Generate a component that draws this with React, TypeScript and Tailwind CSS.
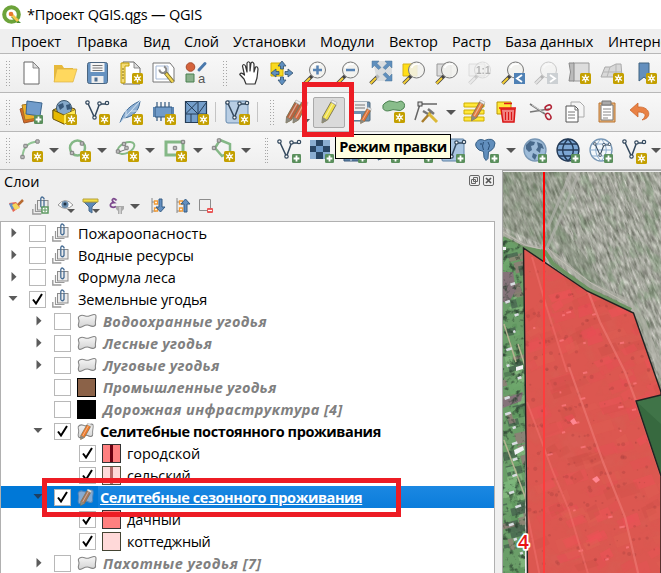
import React from "react";

type P = { children?: React.ReactNode };

const I = ({ children }: P) => (
  <div className="flex h-[38px] w-[33px] shrink-0 items-center justify-center">
    <svg width="24" height="24" viewBox="0 0 24 24" fill="none" className="overflow-visible">{children}</svg>
  </div>
);

const Handle = () => (
  <div className="grid shrink-0 grid-cols-2 gap-x-[2px] gap-y-[2px]">
    {Array.from({ length: 18 }, (_, i) => (
      <i key={i} className="h-px w-px bg-[#a6a6a6]" />
    ))}
  </div>
);

const Drop = () => (
  <div className="flex w-[15px] shrink-0 justify-center">
    <svg width="10" height="5" viewBox="0 0 10 5"><path d="M0 0h10L5 5z" fill="#555" /></svg>
  </div>
);

const ShapeDrop = () => (
  <div className="-ml-[2px] mr-[2px] flex shrink-0"><Drop /></div>
);

const Sep = () => <div className="h-5 w-px shrink-0 bg-[#c4c4c4]" />;

const Star = ({ x = 12, y = 13 }) => (
  <g transform={`translate(${x} ${y})`}>
    <rect width="11" height="11" rx="1.5" fill="#c4a000" />
    <path d="M5.5 1.5v8M2 3.5l7 4M2 7.5l7-4" stroke="#fff" strokeWidth="1.4" />
    <circle cx="5.5" cy="5.5" r="2.1" fill="#fff" />
    <circle cx="5.5" cy="5.5" r=".7" fill="#c4a000" />
  </g>
);

const Plus = ({ x = 14, y = 15 }) => (
  <g transform={`translate(${x} ${y})`}>
    <rect width="9" height="9" rx="1.3" fill="#5a8f5c" />
    <path d="M4.5 1.6v5.8M1.6 4.5h5.8" stroke="#fff" strokeWidth="1.8" />
  </g>
);

const Nodes = ({ pts }: { pts: number[][] }) => (
  <>
    {pts.map(([x, y], i) => (
      <rect key={i} x={x - 1.7} y={y - 1.7} width="3.4" height="3.4" rx=".5" fill="#bbb" stroke="#777" strokeWidth=".9" />
    ))}
  </>
);

const Lens = ({ faint = false, children }: P & { faint?: boolean }) => (
  <g opacity={faint ? 0.35 : 1}>
    <path d="M9.500 14.500 1.500 22.500" stroke="#444" strokeWidth="3.600" />
    <path d="M7 17 1.500 22.500" stroke={faint ? "#ccc" : "#f5cf35"} strokeWidth="2" />
    <circle cx="14.500" cy="9" r="8" fill="#f1f1ee" fillOpacity=".88" stroke="#777" />
    <path d="M9.500 7a6 6 0 0 1 8-3.500" stroke="#fff" strokeWidth="1.500" />
    {children}
  </g>
);

const Pencil = ({ c = "#e27136", x = 0, y = 0, s = 1 }) => (
  <g transform={`translate(${x} ${y}) scale(${s})`} strokeLinejoin="round">
    <path d="M14 2l5 3-8.500 15-5.500 3 .5-6z" fill={c} stroke="#766f50" strokeWidth=".9" />
    <path d="M16 3.500 8 17.800" stroke="#fff" strokeOpacity=".45" strokeWidth="1.300" />
    <path d="M14 2l1-2 5 2.500-1 2.500z" fill="#eee" stroke="#aaa" strokeWidth=".7" />
    <path d="M5.500 17l5 3-5.500 3z" fill="#8a8a80" />
  </g>
);

const V = () => (
  <g stroke="#34495e" strokeWidth="1.200">
    <path d="M3 3.500 9.500 17.500 14.500 4h8" strokeWidth="1.500" />
    <g fill="#fff"><circle cx="2.500" cy="2.500" r="1.700" /><circle cx="9.500" cy="17.500" r="1.700" /><circle cx="14.500" cy="3.500" r="1.700" /><circle cx="22" cy="3" r="1.700" /></g>
  </g>
);

const Page = ({ w = 16 }) => (
  <>
    <path d={`M4 1h${w - 6}l6 6v16H4z`} fill="#fff" stroke="#666" />
    <path d={`M${w - 2} 1v6h6z`} fill="#ddd" stroke="#777" strokeWidth=".8" />
  </>
);

const Globe = ({ kind = 0 }) => (
  <>
    <circle cx="12" cy="11" r="11" fill={kind === 2 ? "#f4f8fb" : kind ? "#7da7d4" : "#9dbbd8"} stroke={kind === 1 ? "#243b57" : "#7897b5"} strokeWidth="1.300" />
    {kind === 0 ? (
      <path d="M3 6l4-4 5 1-1 3-3 1 1 4-3 2-3-3zM14 3l5 2 2 5-3-1-1 5-4-3 2-3zM10 14l4 2-2 5-3-3z" fill="#48698b" />
    ) : (
      <path d="M1 11h22M3 5h18M3 17h18M12 0c-7 7-7 15 0 22M12 0c7 7 7 15 0 22" stroke={kind === 1 ? "#243b57" : "#8caccd"} strokeWidth={kind === 1 ? 1.6 : 1} />
    )}
    {kind === 2 && <g transform="translate(4 3) scale(.75)"><V /></g>}
    <Plus x={15} y={15} />
  </>
);

const Clip = ({ children }: P) => (
  <svg width="18" height="19" viewBox="0 0 18 19" fill="none" className="-mt-[2px] overflow-visible">
    <path d="M.8 13v5h8.500" stroke="#9a9a9a" strokeWidth="1.400" />
    <path d="M3.500 8v7.500h9" stroke="#999" strokeWidth="1.200" />
    <rect x="5.500" y="4.500" width="10.500" height="9.500" fill="#ececec" stroke="#8b8b8b" />
    <path d="M12 4v6.500q-1.800 2.500-3.200 0V2.500q1-3 3.200 0v1" stroke="#466c93" strokeWidth="1.300" />
    {children}
  </svg>
);

const BLOB = "M1.500 3.500C5-1 8 4 12 2.500S19 0 19 3s-1 4-.5 7-3 3.500-6 2-5 0-8 1.500S.8 12 1.800 9 .8 6 1.500 3.500z";

const Poly = ({ edit = false, sel = false }) => (
  <svg width="21" height="17" viewBox="0 0 21 17" fill="none">
    <defs><linearGradient id="pg" x2="0" y2="1"><stop stopColor="#f6f6f6" /><stop offset="1" stopColor="#d3d3d3" /></linearGradient></defs>
    <path d={BLOB} fill={sel ? "#86abd2" : "url(#pg)"} stroke={sel ? "#5387ba" : "#858585"} strokeWidth="1.100" transform={edit ? "scale(.85 1.050)" : "translate(0 .5)"} />
    {edit && <Pencil x={0} y={0} s={0.72} c={sel ? "#a8765a" : "#ef7a2a"} />}
  </svg>
);

const Row1 = () => (
  <>
    <I><Page w={15} /></I>
    <I><path d="M1 4h8l2 3h9v14H1z" fill="#e7b93a" /><path d="M4 8h20l-4 13H1z" fill="#ffd85e" stroke="#dbb145" strokeWidth=".7" /></I>
    <I><rect x="1.500" y="1.500" width="20" height="21" rx="2" fill="#6692c0" stroke="#4a6580" /><path d="M4.500 2h14v9h-14z" fill="#f5f5f5" /><path d="M6.500 4.500h10M6.500 7h10M6.500 9.500h10" stroke="#777" /><path d="M5.500 15h12v7h-12z" fill="#eee" /><path d="M8.500 16.500h3v4h-3z" fill="#4f6f91" /></I>
    <I><Page w={17} /><path d="M2 2h8v3H6v17H2z" fill="#f4dc78" stroke="#c4a000" /><path d="M3 8h2M3 11h2M3 14h2M3 17h2" stroke="#6c5700" strokeWidth=".8" /><Star x={13} y={12} /></I>
    <I><path d="M1 2h17l4 5v14H1z" fill="#fff" stroke="#777" /><path d="M4 5h12v13H4z" stroke="#a6b9d7" /><path d="M12.500 10.500 21 21" stroke="#786d32" strokeWidth="4" /><path d="M14 12.500 21 21" stroke="#f1d450" strokeWidth="2.200" /><path d="M7.500 8.500a3.500 3.500 0 0 0 6 2.500 3.500 3.500 0 0 0-1.500-5.500" stroke="#8c8c8c" strokeWidth="2" /></I>
    <I><circle cx="5.500" cy="6" r="4.300" fill="#d5633c" stroke="#a74b2d" /><path d="M20 2.500 14 9" stroke="#4a79ac" strokeWidth="3" strokeLinecap="round" /><path d="M1 13h8v8H1z" fill="#8ab08b" stroke="#4b8050" /><text x="13" y="21.500" fill="#555" fontFamily="Liberation Sans" fontSize="13">a</text></I>
    <div className="ml-[10px] mr-[5px]"><Handle /></div>
    <I><path d="M7 23 5 18 .8 13.500Q1.500 10.500 5.500 14L3.500 5q1-3 3 0l1.500 6V2q1.500-2.500 3 0v8l1-8q2-2 3 1v8l1.500-5q2-1 2.500 2l-1 9-2 6z" fill="#fff" stroke="#333" strokeLinejoin="round" strokeWidth="1.200" transform="translate(2 0)" /></I>
    <I><path d="M1 2h12v13H1z" fill="#f8d91f" stroke="#d1ac00" /><path d="M12 0l4 5h-2.500v3h-3V5H8zM12 24l-4-5h2.500v-3h3v3H16zM1 12l5-4v2.500h3v3H6V16zM23 12l-5-4v2.500h-3v3h3V16z" fill="#5f8fc0" stroke="#35536f" strokeWidth=".8" /></I>
    <I><Lens><path d="M14.500 4.500v9M10 9h9" stroke="#5783b4" strokeWidth="2.500" /></Lens></I>
    <I><Lens><path d="M10 9h9" stroke="#5783b4" strokeWidth="2.500" /></Lens></I>
    <I><path d="M9.500 14.500 1.500 22.500" stroke="#444" strokeWidth="3.600" /><path d="M7 17 1.500 22.500" stroke="#f5cf35" strokeWidth="2" /><path d="M4 0h19v20H8z" fill="#d3d7d9" fillOpacity=".8" /><path d="M3 0h7L8 2.500l4 4-2.500 2-4-4L3 7zM23 0h-7l2 2.500-4 4 2.500 2 4-4L23 7zM23 20h-7l2-2.500-4-4 2.500-2 4 4L23 13z" fill="#5f8fbd" stroke="#4b7498" strokeWidth=".5" /></I>
    <I><path d="M1 3h14v12H1z" fill="#ffde17" stroke="#d7b216" /><Lens /></I>
    <I><path d="M2 3h14v12H2z" fill="#ddd" stroke="#999" /><Lens /></I>
    <I><g opacity=".6"><path d="M1 3h16v12H1z" fill="#eee" stroke="#ccc" /><Lens faint /><text x="8" y="12.500" fontSize="10" fontWeight="bold" fill="#888" fontFamily="Liberation Sans">1:1</text></g></I>
    <I><Lens /><path d="M13 12h11v11H13z" fill="#4f81b5" /><path d="m21 14-5 3.500 5 3.500" stroke="#fff" strokeWidth="1.900" /></I>
    <I><Lens faint /><path d="M13 12h11v11H13z" fill="#ccd0d3" /><path d="m16 14 5 3.500-5 3.500" stroke="#fff" strokeWidth="1.900" /></I>
    <I><path d="M6 2h16v18H6z" fill="#ddd" stroke="#999" /><path d="M2 2h5v18H2q3-9 0-18z" fill="#bbb" stroke="#888" /><Star x={13} y={12} /></I>
    <I><path d="m5 6 5 0 6-3h5l1 13-10 0H1z" fill="#d8d8d8" stroke="#aaa" /><path d="M10 6 7 16M16 3v13M3 11h19" stroke="#b5b5b5" /><Star x={13} y={12} /></I>
    <I><path d="M6 2h10v18l-5-4-5 4z" fill="#638fbe" stroke="#426580" /><Star x={13} y={12} /></I>
  </>
);

const Row2 = () => (
  <>
    <I><path d="m1 9 14-4 4 15-14 3z" fill="#d66b25" stroke="#9b5428" /><path d="m3 5 14-2 2 15-13 2z" fill="#edb12a" stroke="#a27423" /><path d="m8 1 15 2-2 13-14-2z" fill="#719ccb" stroke="#3c658d" /><Plus x={15} /></I>
    <I><path d="M1 10 12 5l11 4v9l-11 6-11-6z" fill="#e7bd22" stroke="#5c4e20" /><circle cx="12" cy="8" r="7.500" fill="#85a9cb" stroke="#3b566d" /><path d="m6 5 5-2 1 4-4 3zm8 0 4-1 1 5-4 1z" fill="#38587a" /><path d="m1 10 11 5 11-5v9l-11 5-11-5z" fill="#e6b900" stroke="#6d5810" /><path d="m12 15 11-5v9l-11 5z" fill="#ffea58" /><Star x={14} y={14} /></I>
    <I><V /><Star x={14} y={14} /></I>
    <I><path d="M2 23c2-7 6-16 20-22-1 11-8 16-16 17" fill="#8caed2" stroke="#426d99" /><path d="M2 23 22 1M8 16V9m5 2h8" stroke="#d9e7f4" /><Star x={14} y={14} /></I>
    <I><path d="M4 7h17v10H4z" fill="#709bc9" stroke="#31577e" /><path d="M6 7V2m4 5V2m4 5V2m4 5V2M6 17v4m4-4v4" stroke="#31577e" strokeWidth="1.200" /><path d="M2 7h2v10H2zM21 7h2v10h-2z" fill="#5d86b1" /><Star x={14} y={14} /></I>
    <I><path d="M1.500 1.500h21v21h-21z" fill="#749eca" stroke="#263e58" strokeWidth="1.200" /><path d="M1.500 1.500 14 14m0-12.500L1.500 14M14 1v22M1 14h22M7 14v9M14 14 22 3" stroke="#263e58" /><Star x={14} y={14} /></I>
    <div className="ml-[3px] mr-[4px]"><Sep /></div>
    <I><rect x="1" y="1" width="22" height="22" rx="2" fill="#b9cee4" stroke="#6489ae" /><V /><Star x={14} y={14} /></I>
    <div className="ml-[4px]"><Sep /></div>
    <div className="ml-[12px] mr-[5px]"><Handle /></div>
    <I><Pencil c="#b8623e" x={-3} y={0} /><Pencil c="#d2653d" x={4} y={0} /><path d="M19 19h7l-3.500 4z" fill="#555" /></I>
    <div className="ml-px mr-[-1px] flex h-[31px] w-8 shrink-0 items-center justify-center rounded-[2px] border border-[#aaa] bg-[#dadada]">
      <I><Pencil c="#efdf49" /></I>
    </div>
    <I><rect x="1" y="2" width="20" height="19" rx="1" fill="#7091ae" stroke="#526a7d" /><path d="M4 2h14v9H4z" fill="#eee" /><path d="M6 5h10M6 8h10" stroke="#777" /><path d="M5 14h7v6H5z" fill="#fff" /><Pencil x={8} y={7} s={0.72} /></I>
    <I><path d="M3 3q4-3.500 8-1.500t8-.5q5 2 3 7-3 4-8 2-3-1-6 .5-5 1.500-7-2-1-4 2-5.500z" fill="#89bd8b" stroke="#4b8150" /><Star x={12} y={12} /></I>
    <I><path d="M0 20 5 4h17" stroke="#666" strokeWidth="1.500" /><rect x="3" y="2" width="4" height="4" fill="#ddd" stroke="#444" /><path d="m7 22 9-10" stroke="#a87d2c" strokeWidth="2.500" /><path d="m13 13 9 9" stroke="#dcb936" strokeWidth="3" /><path d="m13 9 6 5M8 11l5 3" stroke="#777" strokeWidth="2.500" /></I>
    <Drop />
    <I><g fill="#ffe83a" stroke="#cfae00"><path d="M1 3h20v4H1zM1 10h20v4H1zM1 17h20v4H1z" /></g><Pencil c="#e07a3b" x={4} y={0} s={0.9} /></I>
    <I><g transform="translate(1 0)"><path d="M0 2h14v12H0z" fill="#ffe83a" stroke="#b99600" /><path d="M4 9h14l-1 13H6z" fill="#f08080" stroke="#d91515" strokeWidth="1.500" /><path d="M8.500 12v8m3-8v8m3-8v8" stroke="#d91515" /><path d="M2 8h17M7 3.500h8" stroke="#e11a1a" strokeWidth="1.500" /></g></I>
    <I><path d="m1 4 15 10M1 12l19-3" stroke="#777" strokeWidth="1.600" /><path d="m3 5 11 7" stroke="#ddd" strokeWidth=".8" /><ellipse cx="19" cy="7.500" rx="3.300" ry="2.200" transform="rotate(-25 19 7)" stroke="#b22638" strokeWidth="1.500" /><ellipse cx="19" cy="16.500" rx="2.300" ry="3.300" transform="rotate(-35 19 16)" stroke="#b22638" strokeWidth="1.500" /></I>
    <I><path d="M9 2h9l4 4v11H9z" fill="#f5f5f5" stroke="#aaa" /><path d="M4 6h9l3 3v13H4z" fill="#fff" stroke="#555" /><path d="M13 6v4h3M6 12h7m-7 3h7m-7 3h7" stroke="#777" /></I>
    <I><path d="M4 3h16v19H4z" fill="#e9b57c" stroke="#b97532" /><path d="M6 5h12v15H6z" fill="#fff" stroke="#777" /><path d="M7 1h9v4H7z" fill="#aaa" stroke="#777" /><path d="M8 9h8m-8 3h8m-8 3h8m-8 3h5" stroke="#888" /></I>
    <I><path d="M2 10 10 3v4c12-1 15 11 4 13 5-4 4-8-4-8v5z" fill="#e98245" stroke="#c75f23" strokeWidth=".7" /></I>
  </>
);

const Row3 = () => (
  <>
    <I><path d="M2.500 18C3 8 8 3 18 2.500" stroke="#91c494" strokeWidth="2" /><Nodes pts={[[2.5, 18], [5.500, 7], [17.500, 2.500]]} /><Star x={12} y={12} /></I><ShapeDrop />
    <I><circle cx="9.500" cy="9" r="7.500" stroke="#84b886" strokeWidth="2.500" /><Nodes pts={[[14, 4.500], [4, 14]]} /><Star x={12} y={12} /></I><ShapeDrop />
    <I><ellipse cx="10" cy="9" rx="9" ry="5" transform="rotate(-25 10 9)" stroke="#84b886" strokeWidth="2" /><path d="m8 5 3 5-8 3" stroke="#777" /><Nodes pts={[[8, 5], [2, 12.500], [10.500, 9]]} /><Star x={12} y={12} /></I><ShapeDrop />
    <I><path d="M2 3h17v13H2z" stroke="#84b886" strokeWidth="3" /><Nodes pts={[[19, 3], [11, 9]]} /><Star x={12} y={12} /></I><ShapeDrop />
    <I><path d="m8 1 10 4v8l-8 4-7-8z" stroke="#84b886" strokeWidth="2.500" /><Nodes pts={[[7, 1.500], [2, 9]]} /><Star x={12} y={12} /></I><ShapeDrop />
    <div className="ml-[10px] mr-[5px]"><Handle /></div>
    <I><V /><Plus x={15} y={15} /></I>
    <I><path d="M0 1h20v19H0z" fill="#8aadd1" /><path d="M6 1h7v6h7v6h-7v7H6v-7H0V7h6z" fill="#284564" /><path d="M6 7h7v6H6z" fill="#6c98c7" /><Plus x={15} y={15} /></I>
    <I><path d="M1 1h20v21H1z" fill="#5e82a7" stroke="#38587a" /><path d="M1 8h20M1 15h20M8 1v21" stroke="#dae6ef" /><Plus x={15} y={15} /></I>
    <I><path d="M2 21Q8 0 22 2 20 17 2 21z" fill="#7ba4cd" stroke="#355c82" /><Plus x={15} y={15} /></I>
    <I><V /><Plus x={15} y={15} /></I>
    <I><rect x="0" y="0" width="22" height="22" rx="1" fill="#a9c5e1" stroke="#5d80a3" /><V /><Plus x={14} y={15} /></I>
    <I><path d="M1.500 3q3-4 8-1.500Q18-2 20 4q0 5-4.500 8l-2 .5-.5 7-2 2-2-3-.5-6L4 11Q-1 7 1.500 3z" fill="#628fbd" stroke="#365e84" /><path d="M8.500 3q-2 4 0 8M13 3q3 3 0 8" stroke="#294e75" /><circle cx="6" cy="5" r=".8" fill="#183b61" /><Plus x={15} y={15} /></I><Drop />
    <I><Globe /></I><I><Globe kind={1} /></I><I><Globe kind={2} /></I>
    <I><V /><Star x={14} y={14} /></I><ShapeDrop />
  </>
);

const PanelTools = () => (
  <div className="flex h-[30px] items-center gap-[7px] pl-[7px]">
    <svg width="18" height="18" viewBox="0 0 18 18" fill="none"><path d="m2 6 7-1 4 5-7 5q-2-5-4-9z" fill="#e66854" /><path d="m2 7 3 6 3-3-3-4z" fill="#648fc8" /><path d="m5 8 3 5 5-2-4-5z" fill="#f4d85b" /><path d="m11 8 5-5" stroke="#b86b32" strokeWidth="2.500" /></svg>
    <Clip><path d="M10 11h6v6h-6z" fill="#fff" stroke="#5c9860" strokeWidth="1.500" /><path d="M13 12v4M11 14h4" stroke="#5c9860" /></Clip>
    <svg width="18" height="18" viewBox="0 0 18 18" fill="none"><path d="M1 8q7-9 15 0-7 7-15 0z" fill="#fff" stroke="#999" /><circle cx="8" cy="7.500" r="3.500" fill="#698cad" /><circle cx="8" cy="7" r="1.500" fill="#234" /><path d="M10 12h8l-4 4z" fill="#555" /></svg>
    <svg width="18" height="18" viewBox="0 0 18 18" fill="none"><path d="M2 5h13l-5 5v6l-3-2v-4z" fill="#5b88b8" stroke="#47698b" /><path d="M1 2h15v3H1z" fill="#f2dd42" stroke="#b5a13d" /><path d="M10 12h8l-4 4z" fill="#555" /></svg>
    <svg width="18" height="18" viewBox="0 0 18 18" fill="none" className="ml-px overflow-visible"><path d="M8.500 3.500C6-.5 2 3 6 5.500 0 6 2 12.500 8 9.500" stroke="#7d4a8e" strokeWidth="1.800" /><path d="M8 9h8v3l-2 2v3h-4v-3l-2-2z" fill="#aaa" /><path d="M12 10v7" stroke="#eee" /></svg>
    <div className="-ml-[6px] mr-px"><Drop /></div>
    {[0, 1].map((k) => (
      <svg key={k} width="18" height="18" viewBox="0 0 18 18" fill="none"><path d="M2 1v15M2 5h4M2 14h4" stroke="#888" /><path d="M4.500 4h3v3h-3zM4.500 11h3v3h-3z" fill="#fff" stroke="#f29a34" strokeWidth="1.300" /><path d="M9 2h3v8h3l-4.500 5L6 10h3z" fill="#638fc0" stroke="#365d84" transform={k ? "rotate(180 10.500 8.500)" : ""} /></svg>
    ))}
    <svg width="18" height="18" viewBox="0 0 18 18" fill="none" className="-ml-[2px]"><path d="M1.500 2.500h11v11h-11z" fill="#eee" stroke="#8c8c8c" /><rect x="9" y="11" width="6" height="5" rx="1" fill="#e95353" /><path d="M10 13.500h4" stroke="#fff" strokeWidth="1.200" /></svg>
  </div>
);

const Check = ({ on }: { on?: boolean }) => (
  <div className="flex size-[17px] shrink-0 items-center justify-center border border-[#b8b8b8] bg-white">
    {on && <svg width="11" height="12" viewBox="0 0 11 12" fill="none"><path d="M1 6.500 4 10.500 10 1" stroke="#000" strokeWidth="2" /></svg>}
  </div>
);

const Arrow = ({ open, dark }: { open?: boolean; dark?: boolean }) => (
  <svg width="10" height="10" viewBox="0 0 10 10" fill={dark ? "#1d3f63" : "#5b5b5b"}><path d={open ? "M.5 2h9L5 7z" : "M3.500 0v9.500L8.500 4.800z"} /></svg>
);

type Item = { t: string; cls: string; arrow?: "open" | "closed"; on?: boolean; icon: string; lvl: number; sel?: boolean };

const DIM = "font-bold italic text-[#808080] ";
const items: Item[] = [
  { t: "Пожароопасность", cls: "tracking-[0.03px]", arrow: "closed", icon: "clip", lvl: 0 },
  { t: "Водные ресурсы", cls: "tracking-[-0.07px]", arrow: "closed", icon: "clip", lvl: 0 },
  { t: "Формула леса", cls: "tracking-[-0.07px]", arrow: "closed", icon: "clip", lvl: 0 },
  { t: "Земельные угодья", cls: "tracking-[-0.15px]", arrow: "open", on: true, icon: "clip", lvl: 0 },
  { t: "Водоохранные угодья", cls: DIM + "tracking-[0.33px]", arrow: "closed", icon: "poly", lvl: 1 },
  { t: "Лесные угодья", cls: DIM + "tracking-[0.25px]", arrow: "closed", icon: "poly", lvl: 1 },
  { t: "Луговые угодья", cls: DIM + "tracking-[0.25px]", arrow: "closed", icon: "poly", lvl: 1 },
  { t: "Промышленные угодья", cls: DIM + "tracking-[0.2px]", icon: "brown", lvl: 1 },
  { t: "Дорожная инфраструктура [4]", cls: DIM + "tracking-[0.37px]", icon: "black", lvl: 1 },
  { t: "Селитебные постоянного проживания", cls: "font-bold tracking-[-0.4px]", arrow: "open", on: true, icon: "edit", lvl: 1 },
  { t: "городской", cls: "tracking-[0px]", on: true, icon: "city", lvl: 2 },
  { t: "сельский", cls: "tracking-[-0.15px]", on: true, icon: "village", lvl: 2 },
  { t: "Селитебные сезонного проживания", cls: "font-bold text-white underline tracking-[-0.43px]", arrow: "open", on: true, icon: "editsel", lvl: 1, sel: true },
  { t: "дачный", cls: "tracking-[-0.15px]", on: true, icon: "dacha", lvl: 2 },
  { t: "коттеджный", cls: "tracking-[-0.3px]", on: true, icon: "cottage", lvl: 2 },
  { t: "Пахотные угодья [7]", cls: DIM + "tracking-[0.45px]", arrow: "closed", icon: "poly", lvl: 1 },
];

const swatch: Record<string, string> = {
  brown: "border-black bg-[#8b6248]",
  black: "border-black bg-black",
  city: "border-[#333] bg-[linear-gradient(90deg,#ff8080_41%,#6b0010_41%,#6b0010_59%,#ff8080_59%)]",
  village: "border-[#554] bg-[linear-gradient(90deg,#ffd9d9_41%,#b46868_41%,#b46868_56%,#ffd9d9_56%)]",
  dacha: "border-[#333] bg-[#ff8080]",
  cottage: "border-[#443] bg-[#ffd9d9]",
};
const pad = ["pl-[7px]", "pl-[32px]", "pl-[57px]"];

const Tree = () => (
  <div className="min-h-0 w-[495px] flex-1 overflow-hidden border border-b-0 border-[#b0b0b0] bg-white">
    {items.map((r) => (
      <div key={r.t} className={`flex h-[22px] items-center ${pad[r.lvl]} ${r.sel ? "bg-[linear-gradient(90deg,#0078d7_0,#0078d7_97px,transparent_97px),linear-gradient(#1b88e2,#0b7ddb)]" : ""}`}>
        <div className="mr-[4px] w-[17px] shrink-0">{r.arrow && <Arrow open={r.arrow === "open"} dark={r.sel} />}</div>
        <Check on={r.on} />
        <div className={`ml-[6px] flex shrink-0 items-center ${r.lvl === 0 ? "w-[26px]" : r.icon.startsWith("edit") ? "w-[23px]" : r.lvl === 1 ? "w-[26px]" : "w-[25px]"}`}>
          {r.icon === "clip" ? <Clip /> : r.icon === "poly" ? <Poly /> : r.icon.startsWith("edit") ? <Poly edit sel={r.sel} /> : <div className={`size-[19px] border ${swatch[r.icon]}`} />}
        </div>
        <span className={`whitespace-nowrap pt-[2px] ${r.cls}`}>{r.t}</span>
      </div>
    ))}
  </div>
);

const rnd = (n: number) => {
  const v = Math.sin(n * 127.1 + 11.7) * 43758.5453;
  return v - Math.floor(v);
};
const AREA = "M20.500 76 84 119 130.500 141 158 220V223L133 229 158 304V402H24.500L23 268z";
const greens = ["#5f965f", "#83b67e", "#4f7a54", "#8d8474", "#6fa76c", "#8f7d78", "#486650", "#7db77c"];

const MapView = () => (
  <svg width="158" height="401" viewBox="0 0 158 401" fill="none" className="block">
    <defs>
      <filter id="field" x="0" y="0" width="100%" height="100%" colorInterpolationFilters="sRGB"><feTurbulence type="fractalNoise" baseFrequency=".42 .1" numOctaves="3" seed="4" /><feColorMatrix values=".62 0 0 0 .33 .6 .04 0 0 .33 .62 0 0 0 .3 0 0 0 0 1" /></filter>
      <filter id="patch" x="0" y="0" width="100%" height="100%" colorInterpolationFilters="sRGB"><feTurbulence type="fractalNoise" baseFrequency=".09 .045" numOctaves="4" seed="9" /><feColorMatrix values="0 0 0 0 .4 0 0 0 0 .56 0 0 0 0 .38 5 0 0 0 -2.600" /></filter>
      <filter id="grain" x="0" y="0" width="100%" height="100%" colorInterpolationFilters="sRGB"><feTurbulence type="fractalNoise" baseFrequency=".16" numOctaves="3" seed="2" /><feColorMatrix values="0 0 0 0 .16 0 0 0 0 .24 0 0 0 0 .18 4 0 0 0 -2.150" /></filter>
      <filter id="light" x="0" y="0" width="100%" height="100%" colorInterpolationFilters="sRGB"><feTurbulence type="fractalNoise" baseFrequency=".05" numOctaves="4" seed="7" /><feColorMatrix values="0 0 0 0 .82 0 0 0 0 .4 0 0 0 0 .34 4 0 0 0 -1.900" /></filter>
      <clipPath id="area"><path d={AREA} /></clipPath>
      <clipPath id="strip"><path d="M0 56 22 78V401H0z" /></clipPath>
    </defs>
    <g transform="rotate(-22 79 100)"><rect x="-100" y="-90" width="370" height="420" filter="url(#field)" /></g>
    <g transform="rotate(-22 79 100)"><rect x="-100" y="-90" width="370" height="420" filter="url(#patch)" opacity=".3" /></g>
    <path d="M0 0h65L45 75 0 55z" fill="#62785b" opacity=".22" />
    <path d="M52 66 56 50 90 95 116 132 80 115z" fill="#587052" opacity=".28" />
    <path d="M78-5 62 35 43 78M68 0 45 55" stroke="#b5b6af" strokeWidth="3" opacity=".65" />
    <path d="M-2 60 20 74 40 78 52 84 85 112 125 130 140 150 160 205" stroke="#b1b0a7" strokeWidth="6" opacity=".65" />
    <path d="M0 66 20 76 42 80 50 92 86 118 128 138" stroke="#6d9463" strokeWidth="4" />
    <path d="M20 76 42 78 42 92z" fill="#6d9463" />
    <path d="M45 76l8 9 35 26 36 20M0 60l22 13 16 4" stroke="#c6c2b9" opacity=".8" />
    <g clipPath="url(#strip)">
      <path d="M0 65l24 14v322H0z" fill="#6a9e68" />
      {Array.from({ length: 95 }, (_, i) => (
        <rect key={i} x={rnd(i) * 24 - 4} y={75 + rnd(i + 200) * 330} width={4 + rnd(i + 300) * 12} height={3 + rnd(i + 400) * 9} fill={greens[Math.floor(rnd(i + 500) * 8)]} transform={`rotate(-14 12 ${75 + rnd(i + 200) * 330})`} opacity=".85" />
      ))}
      <path d="M0 100h10l3 18-8 14-6-3zM0 227l20-7-2 9-18 7z" fill="#85737a" />
      <rect y="66" width="24" height="335" filter="url(#grain)" opacity=".8" />
      <path d="M1 152 13 190M15 172l8 25M1 268l23 62" stroke="#b5b391" strokeWidth="1.500" />
      {Array.from({ length: 18 }, (_, i) => (
        <rect key={i} x={rnd(i + 60) * 20} y={110 + i * 16} width={2 + rnd(i) * 4} height="2.500" fill="#d9dde2" transform={`rotate(-18 12 ${110 + i * 16})`} />
      ))}
      <path d="m11 278 9-4 1 4-9 5zM13 195l7-2v4l-7 2zM0 75h3v3H0z" fill="#f2f2f5" />
    </g>
    <path d={AREA} fill="#dc5750" />
    <g clipPath="url(#area)">
      <rect width="158" height="401" filter="url(#light)" opacity=".25" />
      {Array.from({ length: 150 }, (_, i) => (
        <path key={i} d={`M${20 + rnd(i + 31) * 135} ${100 + rnd(i + 77) * 295}l${8 + rnd(i) * 14}-6 4 ${5 + rnd(i + 5) * 7}-${8 + rnd(i) * 14} 6z`} fill={["#ee5158", "#cf5048", "#df6053", "#e74e55"][i % 4]} opacity={0.25 + rnd(i + 9) * 0.3} />
      ))}
      {Array.from({ length: 260 }, (_, i) => (
        <circle key={i} cx={20 + rnd(i + 12) * 138} cy={100 + Math.floor(rnd(i + 23) * 22) * 14 + rnd(i + 40) * 4 - rnd(i + 12) * 18} r={0.6 + rnd(i) * 1.5} fill="#ae4340" opacity=".38" />
      ))}
      {Array.from({ length: 26 }, (_, i) => (
        <rect key={i} x={26 + rnd(i + 312) * 122} y={130 + rnd(i + 423) * 260} width={1.5 + rnd(i) * 4} height="2" fill="#ff7b82" opacity=".7" transform="rotate(-12 80 250)" />
      ))}
      <path d="M29 85 42 130 64 200M24 230 50 300 66 338 86 405M24 340 38 410" stroke="#ee6c67" strokeWidth="2" opacity=".65" />
      <path d="M85 119 97 150 122 200 133 229 158 304M66 195 100 290 122 345 136 405" stroke="#ed7670" strokeWidth="2.200" opacity=".7" />
      <path d="m61 245 8-3 3 4-6 4zM75 135l12-4 3 10-14 5zM84 160l12-4 4 13-15 5z" fill="#ea4c55" opacity=".6" />
      <path d="m67 249 4-3 3 5-4 2zM89 307l5-3 3 4-4 3z" fill="#ff8792" />
    </g>
    <path d="m133 229 26-6v84z" fill="#37693f" /><path d="m133 229 26-6v30z" fill="#4c8354" opacity=".45" />
    <path d={AREA} stroke="#222" strokeWidth="1.400" />
    <path d="M41 0v91" stroke="#ff0000" strokeWidth="2" />
    <path d="M41 90v311" stroke="#ff3c3c" strokeWidth="2" />
    <text x="15" y="377" fontFamily="Open Sans, Noto Sans, sans-serif" fontSize="19" fontWeight="600" fill="#e81313" stroke="#fff" strokeWidth="3.500" strokeLinejoin="round" paintOrder="stroke">4</text>
  </svg>
);

const bar = "flex shrink-0 items-center overflow-hidden border-t border-[#b8b8b8] bg-[linear-gradient(#f8f8f8,#eeeeee)] pl-[6px]";

const menus: [string, string][] = [
  ["Проект", "w-[66px]"], ["Правка", "w-[66px]"], ["Вид", "w-[41px]"], ["Слой", "w-[49px]"], ["Установки", "w-[87px]"],
  ["Модули", "w-[69px]"], ["Вектор", "w-[63px]"], ["Растр", "w-[53px]"], ["База данных", "w-[103px]"], ["Интернет", "w-[80px]"],
];

export default function App() {
  return (
    <div className="relative flex h-[573px] w-[661px] flex-col overflow-hidden bg-[#efefef] font-['Open_Sans','Noto_Sans',sans-serif] text-[14.5px] leading-[20px] text-black">
      <div className="flex h-[29px] shrink-0 items-center bg-white pl-[2px]">
        <svg width="20" height="20" viewBox="0 0 20 20" fill="none"><circle cx="9.500" cy="9.500" r="7.300" stroke="#6ca33a" strokeWidth="4" /><path d="m11 11 8 7h-4l-6-6z" fill="#4b8e2f" /><path d="m8 8 8 8" stroke="#f5c64a" strokeWidth="3" /><circle cx="9" cy="9" r="2.300" fill="#e77a30" /></svg>
        <span className="ml-[5px] whitespace-nowrap tracking-[-0.2px]">*Проект QGIS.qgs — QGIS</span>
      </div>
      <div className="flex h-[24px] shrink-0 items-center bg-[#efefef] pl-[11px] pt-px">
        {menus.map(([t, w]) => <span key={t} className={`shrink-0 whitespace-nowrap tracking-[-0.1px] ${w}`}>{t}</span>)}
      </div>
      <div className={`${bar} h-[39px]`}><Handle /><div className="w-[5px] shrink-0" /><Row1 /></div>
      <div className={`${bar} h-[39px]`}><Handle /><div className="w-[4px] shrink-0" /><Row2 /></div>
      <div className={`${bar} h-[38px]`}><Handle /><div className="w-[5px] shrink-0" /><Row3 /></div>
      <div className="flex min-h-0 flex-1 border-t border-[#b8b8b8]">
        <div className="flex w-[502px] shrink-0 flex-col">
          <div className="flex h-[21px] items-center justify-between pl-1 pr-[8px] pt-[2px]">
            <span>Слои</span>
            <div className="-mt-[2px] flex gap-[3px]">
              {[0, 1].map((k) => (
                <svg key={k} width="11" height="11" viewBox="0 0 11 11" fill="none"><rect x=".5" y=".5" width="10" height="10" rx="1.500" stroke="#666" />{k ? <path d="m3 3 5 5m0-5L3 8" stroke="#555" strokeWidth="1.700" /> : <path d="M4.500 2.500h4v4h-4zM2.500 4.500h4v4h-4z" fill="#eee" stroke="#666" />}</svg>
              ))}
            </div>
          </div>
          <PanelTools />
          <Tree />
        </div>
        <div className="min-w-0 flex-1 border-l border-t border-[#a8a8a8] pt-px"><MapView /></div>
      </div>
      <div className="absolute left-[335px] top-[134px] flex h-[25px] w-[116px] items-center justify-center whitespace-nowrap border border-black bg-[#ffffe1] font-bold tracking-[-0.45px]">Режим правки</div>
      <div className="absolute left-[302px] top-[82px] h-[55px] w-[52px] border-[5px] border-[#ed1c24]" />
      <div className="absolute left-[42px] top-[478px] h-[39px] w-[359px] border-[5px] border-[#ed1c24]" />
    </div>
  );
}
